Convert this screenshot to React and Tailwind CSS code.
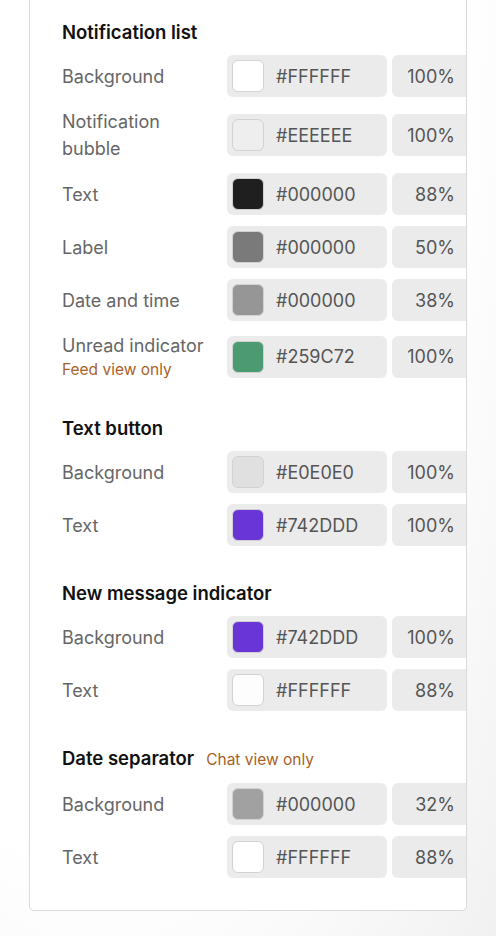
import React from "react";

const sections = [
  {
    title: "Notification list",
    rows: [
      { label: "Background", swatch: "#FFFFFF", hex: "#FFFFFF", pct: "100%" },
      { label: "Notification bubble", swatch: "#EEEEEE", hex: "#EEEEEE", pct: "100%", narrow: true },
      { label: "Text", swatch: "#1f1f1f", hex: "#000000", pct: "88%" },
      { label: "Label", swatch: "#7a7a7a", hex: "#000000", pct: "50%" },
      { label: "Date and time", swatch: "#969696", hex: "#000000", pct: "38%" },
      { label: "Unread indicator", note: "Feed view only", swatch: "#4b9a72", hex: "#259C72", pct: "100%" },
    ],
  },
  {
    title: "Text button",
    rows: [
      { label: "Background", swatch: "#E0E0E0", hex: "#E0E0E0", pct: "100%" },
      { label: "Text", swatch: "#6a35d6", hex: "#742DDD", pct: "100%" },
    ],
  },
  {
    title: "New message indicator",
    rows: [
      { label: "Background", swatch: "#6a35d6", hex: "#742DDD", pct: "100%" },
      { label: "Text", swatch: "#FDFDFD", hex: "#FFFFFF", pct: "88%" },
    ],
  },
  {
    title: "Date separator",
    titleNote: "Chat view only",
    rows: [
      { label: "Background", swatch: "#a1a1a1", hex: "#000000", pct: "32%" },
      { label: "Text", swatch: "#FFFFFF", hex: "#FFFFFF", pct: "88%" },
    ],
  },
];

function Row({ r }) {
  return (
    <div className="flex items-center">
      <div className="w-[165px] shrink-0 pr-3">
        <div className={`text-[18px] leading-[27px] text-[#666666] ${r.narrow ? "w-[110px]" : ""}`}>
          {r.label}
        </div>
        {r.note && (
          <div className="text-[15.5px] leading-[22px] text-[#a8611f]">{r.note}</div>
        )}
      </div>
      <div className="flex h-[42px] w-[160px] shrink-0 items-center rounded-[6px] bg-[#ebebeb] pl-[5px]">
        <div
          className="h-[32px] w-[32px] rounded-[6px] border border-[#d2d2d2]"
          style={{ backgroundColor: r.swatch }}
        />
        <span className="ml-[12px] text-[18px] text-[#555555]">{r.hex}</span>
      </div>
      <div className="ml-[5px] flex h-[42px] flex-1 items-center justify-end rounded-l-[6px] bg-[#ebebeb] pr-[11px] text-[18px] text-[#555555]">
        {r.pct}
      </div>
    </div>
  );
}

export default function App() {
  return (
    <div
      className="relative h-[936px] w-[496px] overflow-hidden"
      style={{ fontFamily: "Inter, 'Noto Sans', sans-serif" }}
    >
      <div className="absolute inset-0 bg-[radial-gradient(ellipse_at_20%_0%,#ffffff_65%,#f1f1f1_100%)]" />
      <div className="relative ml-[29px] mt-[-20px] w-[438px] overflow-hidden rounded-b-[5px] border border-[#dadada] bg-white pb-[32px] pl-[32px]">
        <div className="flex flex-col gap-[35px] pt-[39px]">
          {sections.map((s) => (
            <div key={s.title} className="flex flex-col">
              <div className="mb-[11px] flex items-baseline gap-3 leading-[24px]">
                <span className="text-[18.5px] font-semibold text-[#111111]">{s.title}</span>
                {s.titleNote && (
                  <span className="text-[15.5px] text-[#a8611f]">{s.titleNote}</span>
                )}
              </div>
              <div className="flex flex-col gap-[11px]">
                {s.rows.map((r, i) => (
                  <Row key={i} r={r} />
                ))}
              </div>
            </div>
          ))}
        </div>
      </div>
    </div>
  );
}
